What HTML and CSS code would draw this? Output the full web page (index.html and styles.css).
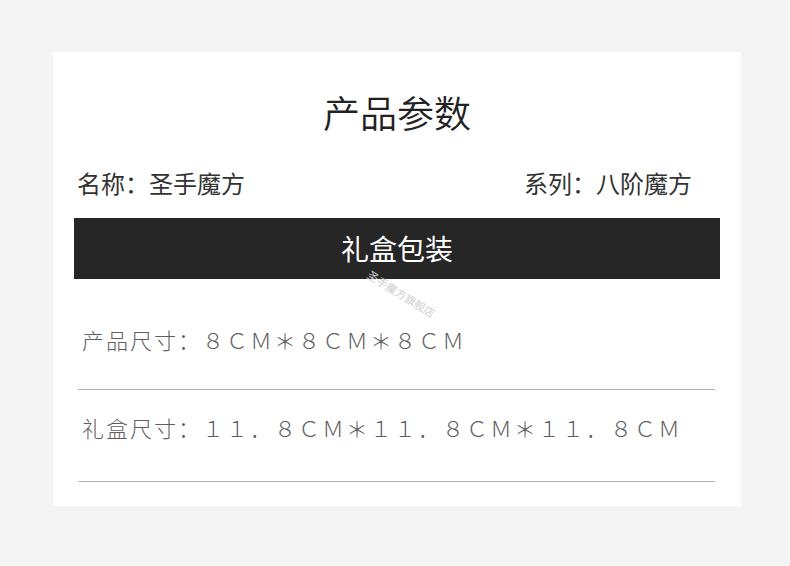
FILE: index.html
```html
<!DOCTYPE html>
<html lang="zh-CN">
<head>
    <meta charset="UTF-8">
    <meta name="viewport" content="width=device-width, initial-scale=1.0">
    <title>产品参数</title>
    <link rel="stylesheet" href="styles.css">
</head>
<body>
    <div class="card">
        <h1 class="title">产品参数</h1>

        <div class="info-row">
            <span>名称：圣手魔方</span>
            <span>系列：八阶魔方</span>
        </div>

        <div class="banner">
            礼盒包装
            <span class="watermark">圣手魔方旗舰店</span>
        </div>

        <ul class="size-list">
            <li>产品尺寸：８ＣＭ＊８ＣＭ＊８ＣＭ</li>
            <li>礼盒尺寸：１１．８ＣＭ＊１１．８ＣＭ＊１１．８ＣＭ</li>
        </ul>
    </div>
</body>
</html>
```

FILE: styles.css
```css
body {
    margin: 0;
    background-color: #f4f4f4;
    font-family: "Noto Sans CJK SC", "Noto Sans", sans-serif;
}

.card {
    width: 688px;
    height: 454px;
    margin: 52px 0 0 53px;
    padding: 0 21px;
    background-color: #ffffff;
    box-sizing: border-box;
}

.title {
    margin: 0;
    padding-top: 38px;
    text-align: center;
    font-size: 37px;
    font-weight: 350;
    line-height: 44px;
    color: #222;
}

.info-row {
    display: flex;
    justify-content: space-between;
    margin: 34px 28px 0 3px;
    font-size: 24px;
    font-weight: 400;
    line-height: 30px;
    color: #333;
}

.banner {
    position: relative;
    margin-top: 20px;
    height: 61px;
    background-color: #262626;
    color: #ffffff;
    text-align: center;
    font-size: 28px;
    line-height: 61px;
}

.watermark {
    position: absolute;
    left: 298px;
    top: 50px;
    font-size: 11px;
    line-height: 12px;
    color: #cfcfcf;
    transform: rotate(32deg);
    transform-origin: left top;
}

.size-list {
    list-style: none;
    margin: 22px 5px 0 4px;
    padding: 0;
}

.size-list li {
    padding: 22px 0 39px 4px;
    border-bottom: 1px solid #b2b2b2;
    font-size: 22px;
    font-weight: 300;
    line-height: 30px;
    letter-spacing: 2px;
    white-space: nowrap;
    color: #5f5f5f;
}

.size-list li:first-child {
    padding: 23px 0 35px 4px;
}
```
